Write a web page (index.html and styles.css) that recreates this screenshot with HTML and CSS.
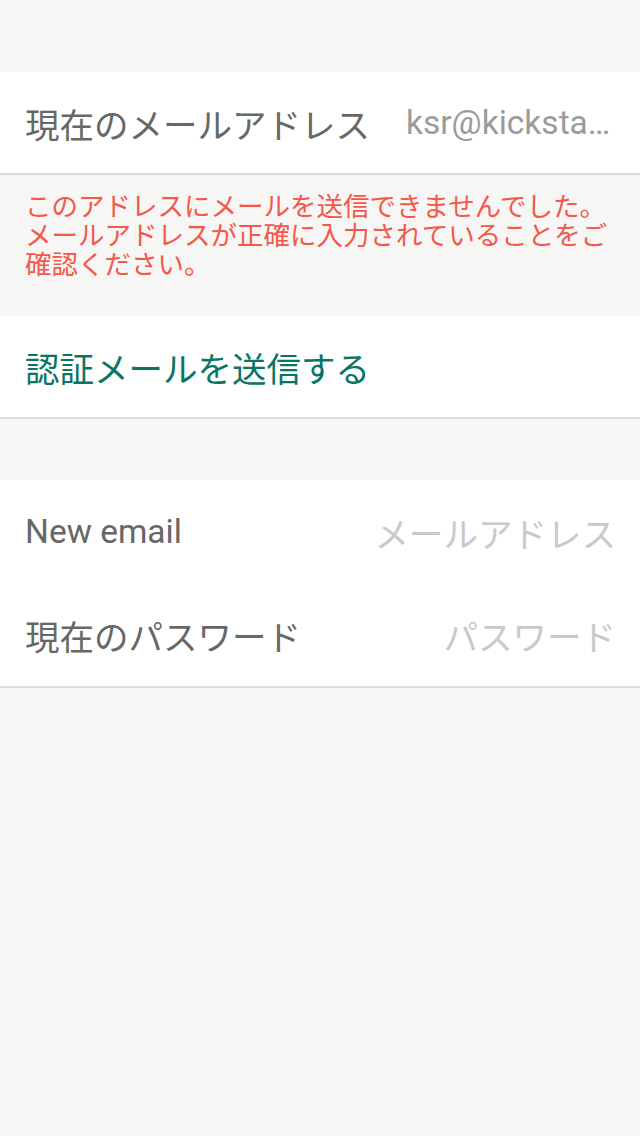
FILE: index.html
```html
<!DOCTYPE html>
<html lang="ja">
<head>
<meta charset="utf-8">
<link rel="stylesheet" href="styles.css">
</head>
<body>
<main class="screen">
  <section class="group group-first">
    <div class="row">
      <span class="label">現在のメールアドレス</span>
      <span class="value">ksr@kickstarter.com</span>
    </div>
  </section>
  <p class="error">このアドレスにメールを送信できませんでした。<br>メールアドレスが正確に入力されていることをご<br>確認ください。</p>
  <section class="group">
    <div class="row">
      <span class="action">認証メールを送信する</span>
    </div>
  </section>
  <section class="group group-form">
    <div class="row row-tall">
      <span class="label latin">New email</span>
      <span class="placeholder">メールアドレス</span>
    </div>
    <div class="row row-tall">
      <span class="label">現在のパスワード</span>
      <span class="placeholder">パスワード</span>
    </div>
  </section>
</main>
</body>
</html>
```
FILE: styles.css
```css
html, body {
  margin: 0;
  padding: 0;
  background: #f6f6f4;
}
body {
  font-family: "Roboto", "Noto Sans CJK JP", sans-serif;
  width: 640px;
  height: 1136px;
  overflow: hidden;
}
.screen {
  padding-top: 72px;
}
.group {
  background: #ffffff;
  border-bottom: 2px solid #dcdcdc;
}
.group-form {
  margin-top: 61px;
}
.row {
  height: 101px;
  display: flex;
  align-items: center;
  padding: 0 24px 0 25px;
  gap: 36px;
  font-size: 34.5px;
}
.row-tall {
  height: 103px;
}
.label {
  color: #666866;
  flex: none;
  white-space: nowrap;
}
.latin {
  font-size: 33.5px;
}
.value {
  flex: 1;
  min-width: 0;
  color: #9a9c9a;
  text-align: right;
  white-space: nowrap;
  overflow: hidden;
  text-overflow: ellipsis;
  font-size: 33.5px;
}
.placeholder {
  flex: 1;
  text-align: right;
  color: #c9c9c9;
  white-space: nowrap;
}
.action {
  color: #0b7563;
}
.error {
  margin: 0;
  padding: 15px 25px 39px;
  color: #f5574a;
  font-size: 26.5px;
  line-height: 29px;
  font-family: "Noto Sans CJK JP", sans-serif;
}
```
